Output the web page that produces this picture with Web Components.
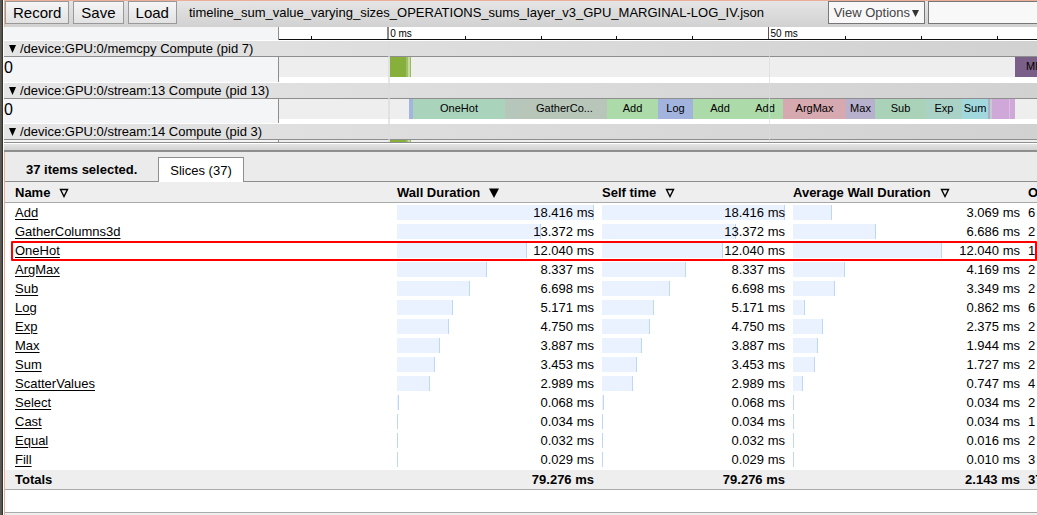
<!DOCTYPE html>
<html lang="en">
<head>
<meta charset="utf-8">
<title>Trace viewer</title>
<style>
body { margin: 0; font-family: "Liberation Sans", Arial, sans-serif; font-size: 13px; line-height: 15px; color: #000; background: #fff; overflow: hidden; }
</style>
</head>
<body>
<trace-app></trace-app>
<script>
const define = (name, html, setup) => customElements.define(name, class extends HTMLElement {
  connectedCallback() {
    if (this.shadowRoot) return;
    const t = document.createElement('template');
    t.innerHTML = html;
    this.attachShadow({ mode: 'open' }).append(t.content.cloneNode(true));
    if (setup) setup(this, this.shadowRoot);
  }
});

define('tool-button', `<style>
:host { display: block; }
button { font: 15px/20px "Liberation Sans", Arial, sans-serif; height: 23px; padding: 0 7px; border: 1px solid #999; background: linear-gradient(#f6f6f6, #e2e2e2); color: #000; display: block; }
:host([kind=menu]) button { font-size: 13px; padding: 0 5px; border-color: #777; background: #f8f8f8; color: #444; }
</style><button type="button"><slot></slot></button>`);

define('tool-bar', `<style>
:host { display: flex; height: 26px; border-top: 1px solid #ecae98; border-left: 1px solid #ecae98; background: linear-gradient(#e5e5e5, #d1d1d1); align-items: flex-start; }
.group { display: flex; gap: 4px; }
.title { margin-left: 12px; line-height: 23px; white-space: nowrap; flex: 1; }
svg { width: 7px; height: 8px; margin-left: 2px; }
input { box-sizing: border-box; width: 109px; height: 23px; margin: 0 0 0 3px; border: 1px solid #777; border-right: 0; background: #f8f8f8; }
</style>
<div class="group"><tool-button>Record</tool-button><tool-button>Save</tool-button><tool-button>Load</tool-button></div>
<div class="title">timeline_sum_value_varying_sizes_OPERATIONS_sums_layer_v3_GPU_MARGINAL-LOG_IV.json</div>
<tool-button kind="menu">View Options<svg viewBox="0 0 7 8"><path d="M0 1h7L3.500 8z" fill="#333"/></svg></tool-button>
<input type="text" aria-label="Search">`);

/* Timeline spans share one scale: the pieces of every row add up to 758 units. */
define('time-ruler', `<style>
:host { display: flex; height: 13px; background: #fff; border-bottom: 1px solid #fff; }
.side { flex: none; width: 274px; background: #f3f5f6; border-right: 1px solid #8e8e8e; }
.scale { flex: 1; display: flex; border-bottom: 1px solid #111; align-items: flex-end; min-width: 0; overflow: hidden; }
i { flex: 76 0 0; min-width: 0; box-sizing: border-box; height: 3px; border-left: 1px solid #111; }
i.first { flex: 33 0 0; border: 0; }
i.last { flex: 40 0 0; }
i.major { height: 12px; border-color: #555; font: 10px/13px "Liberation Sans", Arial, sans-serif; padding-left: 2px; white-space: nowrap; }
i.zero { border-left-width: 2px; border-color: #888; padding-left: 1px; }
</style><div class="side"></div><div class="scale"><i class="first"></i><i></i><i class="major zero">0 ms</i><i></i><i></i><i></i><i></i><i class="major">50 ms</i><i></i><i></i><i class="last"></i></div>`);

define('time-slice', `<style>
:host { display: block; min-width: 0; height: 20px; font-size: 11px; line-height: 18px; text-align: center; white-space: nowrap; }
</style><slot></slot>`, host => {
  host.style.flex = host.getAttribute('span') + ' 0 0';
  host.style.background = host.getAttribute('fill') || 'transparent';
});

define('time-track', `<style>
:host { display: block; }
.head { display: flex; align-items: center; gap: 4px; height: 15px; padding-left: 5px; border-bottom: 1px solid #8e8e8e; background: linear-gradient(90deg, #e5e5e5, #d1d1d1); white-space: nowrap; }
svg { width: 7px; height: 8px; }
.body { display: flex; height: 25px; }
:host([short]) .body { height: 24px; }
:host([cut]) .body { height: 2px; overflow: hidden; }
.side { flex: none; width: 274px; font-size: 16px; line-height: 21px; background: #f3f5f6; border-right: 1px solid #8e8e8e; }
.lane { flex: 1; display: flex; min-width: 0; height: 20px; background: #eee; }
</style>
<div class="head"><svg viewBox="0 0 7 8"><path d="M0 0h7L3.500 8z"/></svg><slot name="title"></slot></div>
<div class="body"><div class="side"><slot name="row"></slot></div><div class="lane"><slot></slot></div></div>`);

define('track-view', `<style>
:host { display: block; position: relative; border-bottom: 1px solid #8e8e8e; overflow: hidden; }
.stack { display: grid; gap: 1px; }
.grid { position: absolute; inset: 0 0 0 275px; display: flex; pointer-events: none; }
.grid i { box-sizing: border-box; border-left: 1px solid rgba(220,220,220,.7); min-width: 0; }
</style>
<div class="stack">
<time-track><span slot="title">/device:GPU:0/memcpy Compute (pid 7)</span><span slot="row">0</span>
<time-slice span="111"></time-slice><time-slice span="16" fill="#86b03b"></time-slice><time-slice span="2" fill="#9fc068"></time-slice><time-slice span="2" fill="#c6daa5"></time-slice><time-slice span="1" fill="#95bc55"></time-slice><time-slice span="604"></time-slice><time-slice span="22" fill="#7a6088"><span style="padding-left:11px">MEMCPYHtoD</span></time-slice></time-track>
<time-track short><span slot="title">/device:GPU:0/stream:13 Compute (pid 13)</span><span slot="row">0</span>
<time-slice span="130"></time-slice><time-slice span="4" fill="#a3b5dc"></time-slice><time-slice span="92" fill="#aad3bb">OneHot</time-slice><time-slice span="17" fill="#b7c6bb"></time-slice><time-slice span="85" fill="#b8c6ba">GatherCo...</time-slice><time-slice span="51" fill="#acdaa8">Add</time-slice><time-slice span="35" fill="#a2b4de">Log</time-slice><time-slice span="54" fill="#acdaa8">Add</time-slice><time-slice span="36" fill="#acdaa8">Add</time-slice><time-slice span="63" fill="#d6a8af">ArgMax</time-slice><time-slice span="29" fill="#b8b1ce">Max</time-slice><time-slice span="51" fill="#aad2b8">Sub</time-slice><time-slice span="36" fill="#a9d1c6">Exp</time-slice><time-slice span="26" fill="#a0d8de">Sum</time-slice><time-slice span="2" fill="#b3a9cf"></time-slice><time-slice span="2" fill="#bfd0c5"></time-slice><time-slice span="17" fill="#cfa8d9"></time-slice><time-slice span="1" fill="#dcbde3"></time-slice><time-slice span="5" fill="#cfa8d9"></time-slice><time-slice span="22"></time-slice></time-track>
<time-track cut><span slot="title">/device:GPU:0/stream:14 Compute (pid 3)</span>
<time-slice span="111"></time-slice><time-slice span="16" fill="#86b03b"></time-slice><time-slice span="2" fill="#9fc068"></time-slice><time-slice span="2" fill="#c6daa5"></time-slice><time-slice span="1" fill="#95bc55"></time-slice><time-slice span="626"></time-slice></time-track>
</div>
<div class="grid"><i style="flex:109 0 0;border:0"></i><i style="flex:381 0 0;border-left-width:2px"></i><i style="flex:268 0 0"></i></div>`);

define('drag-handle', `<style>
:host { display: block; height: 6px; margin-top: 1px; border-bottom: 2px solid #8e8e8e; background: linear-gradient(#e5e5e5, #d1d1d1); }
</style>`);

define('tab-strip', `<style>
:host { display: flex; align-items: flex-end; gap: 21px; height: 29px; padding-left: 21px; background: #ebebeb; border-bottom: 1px solid #8e8e8e; white-space: nowrap; }
b { line-height: 23px; }
button { font: 13px/23px "Liberation Sans", Arial, sans-serif; height: 25px; margin-bottom: -1px; padding: 0 11px; border: 1px solid #8e8e8e; border-bottom: 0; background: #fff; color: #000; }
</style><b>37 items selected.</b><button type="button" role="tab" aria-selected="true">Slices (37)</button>`);

const hollow = '<svg viewBox="0 0 10 10"><path d="M1.500 1.500h7L5 8.500z" fill="none" stroke="#000" stroke-width="1.400"/></svg>';
const solid = '<svg viewBox="0 0 10 10"><path d="M0 .5h10L5 10z"/></svg>';
const rows = [
  ['Add', 18.416, 3.069, 6], ['GatherColumns3d', 13.372, 6.686, 2], ['OneHot', 12.040, 12.040, 1],
  ['ArgMax', 8.337, 4.169, 2], ['Sub', 6.698, 3.349, 2], ['Log', 5.171, 0.862, 6], ['Exp', 4.750, 2.375, 2],
  ['Max', 3.887, 1.944, 2], ['Sum', 3.453, 1.727, 2], ['ScatterValues', 2.989, 0.747, 4],
  ['Select', 0.068, 0.034, 2], ['Cast', 0.034, 0.034, 1], ['Equal', 0.032, 0.016, 2], ['Fill', 0.029, 0.010, 3]];
const cell = v => `<td><div class="meter"><span class="bar" style="width:${v / 18.416 * 100}%"></span><span class="value">${v.toFixed(3)} ms</span></div></td>`;

define('slice-table', `<style>
:host { display: block; padding-bottom: 22px; border-bottom: 1px solid #aaa; background: #fff; }
.wrap { background: linear-gradient(#eee, #eee) 0 0 / 100% 20px no-repeat, linear-gradient(#aaa, #aaa) 0 20px / 100% 1px no-repeat, linear-gradient(#aaa, #aaa) 0 100% / 100% 1px no-repeat, linear-gradient(#eee, #eee) 0 100% / 100% 20px no-repeat; padding-left: 6px; }
table { table-layout: fixed; width: 100%; border-collapse: separate; border-spacing: 0; }
col.wall { width: 205px; } col.self { width: 191px; } col.avg { width: 235px; } col.count { width: 13px; }
th, td { box-sizing: border-box; padding: 1px 4px 3px; text-align: left; white-space: nowrap; height: 19px; }
thead th { height: 22px; padding-top: 2px; }
tfoot td { height: 20px; padding-top: 2px; font-weight: bold; }
tfoot td.sum { text-align: right; }
tbody th { font-weight: normal; }
td:last-child, th:last-child { padding-right: 0; }
a { color: #000; text-decoration: underline; text-underline-offset: 2px; }
svg { width: 10px; height: 10px; margin-left: 9px; vertical-align: -1px; }
.meter { display: grid; }
.meter > * { grid-area: 1 / 1; }
.bar { height: 15px; max-width: calc(100% - 1px); background: #eaf2ff; border-right: 1px solid #bdd7fb; }
.value { text-align: right; }
tr.marked { position: relative; }
tr.marked th::before { content: ""; position: absolute; inset: -1px 0 0; border: 2px solid #f00; pointer-events: none; border-radius: 1px; }
</style>
<div class="wrap"><table>
<colgroup><col><col class="wall"><col class="self"><col class="avg"><col class="count"></colgroup>
<thead><tr><th>Name${hollow}</th><th>Wall Duration${solid}</th><th>Self time${hollow}</th><th>Average Wall Duration${hollow}</th><th>Occurrences</th></tr></thead>
<tbody>${rows.map(([n, w, a, c]) => `<tr${n === 'OneHot' ? ' class="marked"' : ''}><th scope="row"><a href="#${n}">${n}</a></th>${cell(w)}${cell(w)}${cell(a)}<td>${c}</td></tr>`).join('')}</tbody>
<tfoot><tr><td>Totals</td><td class="sum">79.276 ms</td><td class="sum">79.276 ms</td><td class="sum">2.143 ms</td><td>37</td></tr></tfoot>
</table></div>`);

define('trace-app', `<style>
:host { display: block; box-sizing: border-box; min-height: 100vh; background: linear-gradient(90deg, #5d5b55 0 1px, #55534d 1px 2px, #34322d 2px 3px, #fff 3px); padding-left: 4px; overflow: hidden; }
.panel { border-left: 1px solid #ecae98; }
.foot { height: 2px; background: #eee; }
</style>
<tool-bar></tool-bar><time-ruler></time-ruler><track-view></track-view><drag-handle></drag-handle>
<div class="panel"><tab-strip></tab-strip><slice-table></slice-table><div class="foot"></div></div>`);
</script>
</body>
</html>
